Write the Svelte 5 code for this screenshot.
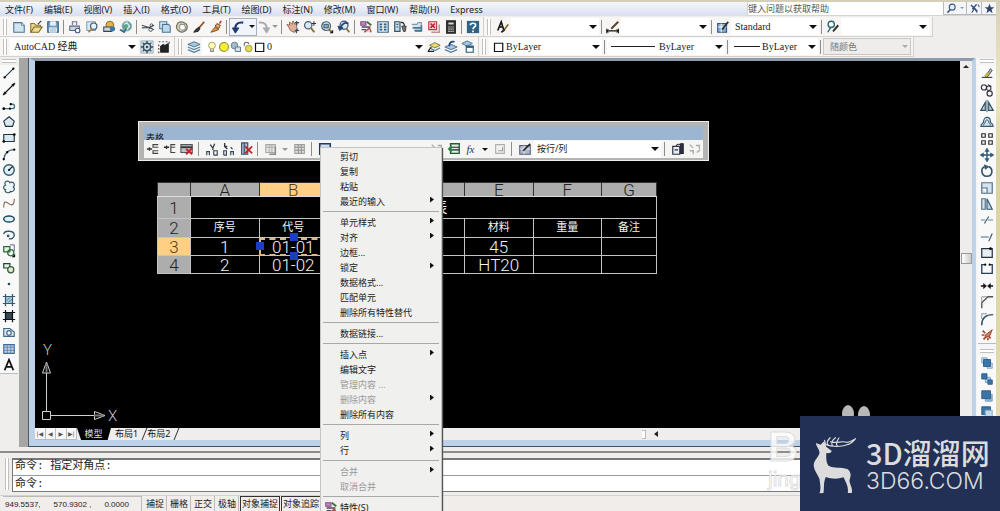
<script>
  const S = (d, c = '#33506b', w = 1.3, f = 'none') =>
    `<path d="${d}" stroke="${c}" stroke-width="${w}" fill="${f}"/>`;

  const icons = {
    new: S('M2 3H11L14 6V14H2Z', '#4d7590', 1.2, '#cfe4f2') + S('M11 3V6H14', '#4d7590', 1, '#fff'),
    open: S('M2 14V4H6L8 6H13V9', '#8a7430', 1.2, '#e8d488') + S('M2 14L6 8H15L11 14Z', '#7a6528', 1.2, '#f1dd8e') + S('M10 5L14 1', '#3e3e3e', 1.5),
    save: S('M2 2H14V14H2Z', '#2f5878', 1.2, '#6d9dc0') + S('M5 2H11V6H5Z', '#dbe9f3', 1, '#e9f2f8') + S('M4 9H12V14H4Z', '#e4eef5', 1, '#b8d0e0'),
    print: S('M5 6V2H10V6', '#7d6d96', 1.2, '#eee') + S('M2 7H13V12H2Z', '#566a86', 1.2, '#cbd4e0') + '<circle cx="11" cy="12" r="2.6" fill="#fff" stroke="#4a5c86" stroke-width="1.3"/>',
    preview: S('M2 2H12V12H2Z', '#6f8eab', 1, '#d9e8f4') + '<circle cx="10" cy="7" r="3.6" fill="#e8f4fb" stroke="#35566f" stroke-width="1.3"/>' + S('M8 10L4 14', '#b07a30', 2),
    publish: '<circle cx="9" cy="6" r="4.5" fill="#e2b93b" stroke="#7a5a21"/>' + S('M2 8H11V13H2Z', '#39424c', 1.2, '#d0d7df') + '<circle cx="12" cy="10" r="3" fill="#3d79a8"/>',
    globe: '<circle cx="9" cy="7" r="5.6" fill="#5ea38c" stroke="#9ab7c8"/>' + S('M6 5L9 3L12 7L9 11', '#d9ecf2', 1.6) + S('M1 11L6 14L8 10', '#375b7a', 1.5, '#80a5c0'),
    cut: S('M1 6L9 8.5L15 6M1 9L9 8.5L15 11', '#3b4652', 1.2) + '<circle cx="11" cy="11" r="2" fill="none" stroke="#3b4652"/><circle cx="12" cy="6" r="1.6" fill="none" stroke="#3b4652"/>',
    copy: S('M2 2H10V10H2Z', '#45779a', 1.2, '#e7f1f8') + S('M5 5H12L14 7V14H5Z', '#45779a', 1.2, '#bcd8ea'),
    paste: S('M3 4C6 0 14 3 14 8C14 13 8 15 5 13C1 11 1 7 3 4Z', '#736b53', 1.3, '#d6cfb2') + S('M6 5H11L12 10L8 12L5 9Z', '#6c7d8c', 1, '#fff'),
    brush: S('M14 2L8 9', '#8b5a2a', 2) + S('M8 8L4 11L2 14L7 13L9 10Z', '#222', 1, '#333'),
    match: S('M2 14L7 8L11 11L6 13Z', '#8c4a20', 1, '#cf9846') + S('M7 7L9 4L13 6L11 10Z', '#6a3f20', 1, '#d9aa60') + S('M12 4L14 1', '#b33', 1.8),
    undo: S('M14 3C7 2 4 6 5 12', '#1e3b70', 2.4) + S('M1.5 9L9 9L5 15Z', '#1e3b70', 1, '#1e3b70'),
    redo: S('M2 3C9 2 12 6 11 12', '#a9adb2', 2.2) + S('M7 9H14.5L11 15Z', '#a9adb2', 1, '#a9adb2'),
    pan: S('M3 8L1 5L4 6L4 2L7 5L8 1L10 5L13 3L12 8L14 12L9 14L5 12Z', '#94604d', 1, '#ddb09a') + S('M12 1V6M10 3H15M12 10V15M10 12H15', '#2f5478', 1.3),
    zoomrt: '<circle cx="6" cy="6" r="4.2" fill="#dbe9f2" stroke="#46627a" stroke-width="1.4"/>' + S('M9 9L13 14', '#8a7034', 2.2) + S('M10 4H15M12.5 1.5V6.5', '#333', 1.2),
    zoomwin: '<circle cx="7" cy="7" r="5" fill="#cfe0ec" stroke="#46627a" stroke-width="1.4"/>' + S('M4.5 5H9.5V9H4.5Z', '#355', 1, '#8ba8b9') + S('M10 11L13 13', '#8a7034', 2.2) + '<path d="M11 15H15V11Z" fill="#111"/>',
    zoomprev: '<circle cx="8" cy="6" r="4.6" fill="#dbe9f2" stroke="#3c5670" stroke-width="1.4"/>' + S('M11 10L14 14', '#8a7034', 2.2) + S('M13 4C9 2 6 4 4 9', '#22447c', 2) + S('M1 7L7 9L3 12Z', '#22447c', 1, '#22447c'),
    props: S('M2 2H8V6H2Z', '#844b86', 1.2, '#b98bc0') + S('M9 2L14 6', '#3c6d3a', 2) + S('M3 8H13M3 11H8', '#4a4a60', 1.5) + S('M6 14L12 9L14 14', '#a94a4a', 1.5, '#ecc'),
    dc: S('M2 2H14V14H2Z', '#466a86', 1.4, '#dcebf4') + S('M4 5H7M9 5H12M4 8H7M9 8H12M4 11H7M9 11H12', '#2f5d80', 1.8),
    palettes: S('M2 2H8V13H2Z', '#33566f', 1.4, '#c9dde9') + S('M4 5H6M4 8H6', '#33566f') + S('M9 3C12 2 13 5 13 7', '#222', 1.4) + S('M10 7H15L14 13H12Z', '#333', 1, '#777'),
    sheet: S('M2 5H8L9 3H13V13H6', '#7b9cb3', 1.2, '#d6e4ee') + S('M3 9H12M5 12H13V6', '#4d7a96', 2),
    markup: S('M2 2H11V11H2Z', '#b43a48', 1.3, '#f6d9dc') + S('M4 4L9 9M9 4L4 9', '#c8202c', 1.8) + S('M5 14H14V5', '#c48d94', 1.6),
    calc: S('M3 1H13V15H3Z', '#222', 1.2, '#333') + S('M5 4H11', '#cfe3c8', 2.2) + S('M5 8H11M5 10.5H11M5 13H11', '#eee', 1.3) + S('M7 7V14M9.3 7V14', '#333', 1),
    help: '<rect x="1" y="1" width="14" height="14" fill="#2d6488"/>' + S('M5 6C5 3 11 3 11 6C11 8 8 8 8 10.5M8 12V14', '#fff', 1.9),
    tstyle: S('M2 12L6 2L9 12M3 8H8', '#111', 1.8) + S('M8 13L14 5', '#7a5020', 1.8) + S('M6 14L10 11', '#222', 2),
    dstyle: S('M1 10V15M14 10V15M1 12.5H14', '#111', 1.5) + S('M3 11L1 12.5L3 14M12 11L14 12.5L12 14', '#111', 1) + S('M6 10L14 2', '#5a4028', 2.2),
    tablest: S('M2 4H12V14H2Z', '#2e557e', 1.4, '#8fb2d2') + S('M2 8H12M6 4V14', '#fff', 1) + S('M7 11L14 2', '#33302a', 2),
    mlstyle: '<circle cx="6" cy="5" r="3.6" fill="#fff" stroke="#2d6070" stroke-width="1.5"/>' + S('M5 9L2 14', '#2d6070', 1.5) + S('M8 13L14 6', '#33302a', 2.2),
    gear: S('M1 1V15H15V1Z', '#7e98aa', 0.8, '#dfe7ed') + '<circle cx="8" cy="8" r="4.2" fill="#cfdce6" stroke="#35505f" stroke-width="1.8"/><circle cx="8" cy="8" r="1.5" fill="#35505f"/>' + S('M8 1V4M8 12V15M1 8H4M12 8H15M3 3L5 5M11 11L13 13M13 3L11 5M5 11L3 13', '#35505f', 1.6),
    myws: S('M4 7L7 5L9 6L13 4V14H4Z', '#222', 1, '#222') + S('M2 2H4M6 2H8M10 2H12M14 2V4M2 5V7M2 9V11M2 13V15', '#555', 1.4),
    layers: S('M1 5L8 2L15 5L8 8Z', '#3e6a8b', 1, '#a9c7dc') + S('M1 8L8 11L15 8M1 11L8 14L15 11', '#56809e', 1.5),
    bulb: '<circle cx="8" cy="6" r="4.5" fill="#fffbb8" stroke="#a59b58" stroke-width="1.2"/>' + S('M6 11V14H10V11', '#777', 1.2, '#ccc'),
    sun: '<circle cx="8" cy="8" r="6" fill="#f5ee3c" stroke="#958c2e" stroke-width="1.4"/>',
    vpfreeze: '<circle cx="6" cy="6" r="4.5" fill="#a7bccb" stroke="#5f7a8e" stroke-width="1.2"/>' + S('M7 8H14V14H7Z', '#55738a', 1.2, '#d5e2eb'),
    lock: S('M3 7V4C3 1 9 1 9 4', '#777', 1.5) + '<circle cx="9" cy="10" r="4.5" fill="#e3dc4a" stroke="#8d8531"/>',
    swatch: S('M2 3H13V14H2Z', '#111', 1.6, '#fff'),
    laymake: S('M3 6L9 3L15 6L9 9Z', '#77702c', 1, '#e6de79') + S('M3 9L9 12L15 9', '#668b9f', 1.5) + S('M1 13L5 8M1 13H8', '#222', 1.3),
    layprev: S('M1 8L8 5L15 8L8 11Z', '#3e6a8b', 1, '#a9c7dc') + S('M1 11L8 14L15 11', '#56809e', 1.5) + S('M12 2C8 1 6 3 6 7', '#22447c', 2),
    layst: S('M1 4L7 1L13 4L7 7Z', '#3e6a8b', 1, '#a9c7dc') + S('M6 7H14V14H6Z', '#2a5a80', 1.3, '#fff') + S('M6 8H14', '#2a5a80', 2),
    line: S('M3 13L13 3', '#1f3540', 1.3) + '<circle cx="3" cy="13" r="1.3"/><circle cx="13" cy="3" r="1.3"/>',
    xline: S('M2 14L14 2', '#111', 1.3) + S('M1 15L3 11L5 13ZM15 1L11 3L13 5Z', '#111', 0.5, '#111'),
    pline: S('M2 11H12C15 11 15 6 12 6H10', '#45748c', 1.6) + '<circle cx="2" cy="11" r="1.6"/><circle cx="10" cy="6" r="1.3"/><circle cx="9" cy="11" r="1.2"/>',
    polygon: S('M8 2L14 7L12 13H4L2 7Z', '#1f3540', 1.3, '#dbe8f0'),
    rect: S('M2 4H14V12H2Z', '#1f3540', 1.3, '#dbe8f0') + '<circle cx="2" cy="12" r="1.5"/><circle cx="14" cy="4" r="1.5"/>',
    arc: S('M2 14C3 7 7 3 14 3', '#35606f', 1.4) + '<circle cx="2" cy="14" r="1.3"/><circle cx="6" cy="6" r="1.3"/><circle cx="14" cy="3" r="1.3"/>',
    circle: '<circle cx="8" cy="8" r="6" fill="#e3f0f7" stroke="#2d5a70" stroke-width="1.6"/>' + S('M8 8L12 4', '#222', 1.3) + '<circle cx="8" cy="8" r="1.2"/>',
    cloud: S('M4 6C1 1 8 0 9 3C14 1 15 6 13 8C16 11 12 14 10 13C8 16 2 14 4 11C1 10 1 7 4 6Z', '#2f5363', 1.3, '#eef5f9'),
    spline: S('M2 13C2 3 6 8 8 9C11 11 14 11 14 3', '#7a5b4c', 1.2),
    ellipse: '<ellipse cx="8" cy="8" rx="6" ry="3.5" fill="#e3f0f7" stroke="#1f4a5a" stroke-width="1.7"/>',
    earc: S('M2 7C3 2 14 3 14 8C14 12 10 13 8 12', '#2f5a74', 1.6) + '<circle cx="7" cy="9" r="1.6" fill="#2f5a74"/>',
    insert: S('M2 3H9V9H2Z', '#2d6a3a', 1.4, '#e5f2e5') + '<circle cx="10" cy="10" r="3.5" fill="none" stroke="#2d6a3a" stroke-width="1.4"/>' + S('M9 1H14V8', '#557', 1) + '<path d="M11 15H15V11Z" fill="#111"/>',
    block: S('M2 3H9V8H2Z', '#1f4630', 1.4, '#e5f2e5') + '<circle cx="10" cy="10" r="3.5" fill="#dfead7" stroke="#395b3a" stroke-width="1.4"/>',
    point: '<circle cx="8" cy="8" r="1.5" fill="#24505c"/>',
    hatch: S('M4 4H12V12H4Z', '#35586d', 1, '#a7cbe0') + S('M1 4H15M1 12H15M4 1V15M12 1V15', '#35586d', 1.4) + S('M5 9L9 5M7 11L11 7', '#35586d', 0.8),
    grad: S('M4 4H12V12H4Z', '#111', 1, '#334654') + S('M1 4H15M1 12H15M4 1V15M12 1V15', '#111', 1.4),
    region: S('M2 13V4H9L14 8V13Z', '#3e6a8b', 1.3, '#d5e6f2') + '<circle cx="8" cy="9" r="2.5" fill="#fff" stroke="#3e6a8b" stroke-width="1.3"/>',
    table: S('M2 3H14V13H2Z', '#3e6a9b', 1.3, '#bcd4ea') + S('M2 6H14M2 9.5H14M6 3V13M10 3V13', '#5c84ac', 1),
    mtext: S('M3 14L8 2L13 14M5 10H11', '#111', 2),
    erase: S('M6 12L12 3L14 5L9 12Z', '#555', 1, '#a9a9a9') + S('M6 12L9 8', '#c6bb2b', 3) + S('M2 13H14', '#333', 1.2),
    copyobj: '<circle cx="4.5" cy="5" r="3" fill="none" stroke="#334" stroke-width="1.3"/><circle cx="10" cy="6" r="2.5" fill="none" stroke="#334" stroke-width="1.2"/><circle cx="11" cy="12" r="3" fill="none" stroke="#334" stroke-width="1.3"/>' + S('M9 2L13 4', '#334'),
    mirror: S('M1 13L6 4V13ZM15 13L10 4V13Z', '#2e4a5b', 1.3, '#c8dbe8') + S('M8 1V15', '#2e4a5b', 1),
    offset: S('M1 13C1 9 4 10 4 8C4 1 12 1 12 8C12 10 15 9 15 13Z', '#35586d', 1.3, '#cfe1ec') + S('M4 12C4 10 6 10 6 8C6 5 10 5 10 8C10 10 12 10 12 12', '#35586d', 1.1),
    array: S('M2 2H6V6H2ZM10 2H14V6H10ZM2 10H6V14H2ZM10 10H14V14H10Z', '#333', 1.4),
    move: S('M8 2V14M2 8H14', '#2e5878', 1.6) + S('M8 0L10.5 4H5.5ZM8 16L5.5 12H10.5ZM0 8L4 5.5V10.5ZM16 8L12 5.5V10.5Z', '#2e5878', 0.5, '#2e5878'),
    rotate: S('M5 3C0 6 2 14 8 14C15 14 15 5 10 3', '#35586d', 1.9) + S('M5 1L10 3L6 6Z', '#35586d', 1, '#35586d'),
    scale: S('M2 2H14V14H2Z', '#4f7086', 1.3, '#d5e4ee') + S('M2 8H8V14', '#4f7086', 1.3, '#fff'),
    stretch: S('M2 2H6V14H2Z', '#4f7086', 1.3, '#d5e4ee') + S('M8 2V14H14Z', '#35586d', 1.3, '#c1d5e2'),
    trim: S('M1 8H6M9 8H15', '#6b8694', 1.4) + S('M5 12L10 4', '#35586d', 1.3),
    extend: S('M1 8H10', '#6b8694', 1.4) + S('M10 13L14 4', '#35586d', 1.3),
    brk1: S('M2 3H14V13H2Z', '#25333c', 1.4, '#e8eff4') + '<circle cx="12" cy="3" r="1.5"/>',
    brk2: S('M6 3H2V13H14V3H11', '#25405b', 1.5) + '<circle cx="6" cy="3" r="1.2"/><circle cx="11" cy="3" r="1.2"/>',
    join: S('M1 8H6M10 8H15', '#111', 1.6) + S('M4 5L7.5 8L4 11ZM12 5L8.5 8L12 11Z', '#111', 0.5, '#111'),
    chamfer: S('M2 15V9L9 2H15', '#555', 1.5, '#eef3f6') + S('M2 8V2H8', '#888', 1),
    fillet: S('M2 15C2 7 6 3 15 3', '#35506f', 1.7) + S('M2 8V2H8', '#888', 1),
    explode: S('M3 3L6 6M2 8H5M4 13L7 10M9 14V11M12 12L10 9', '#a5452d', 1.9) + S('M6 8L14 2L11 9L6 11Z', '#993a28', 1, '#cc7f58'),
    front: S('M2 2H8V8H2Z', '#7fa6c6', 1, '#c3dbed') + S('M8 8H14V14H8Z', '#7fa6c6', 1, '#c3dbed') + S('M4 4H12V12H4Z', '#285a88', 1, '#3d74a6'),
    back: S('M6 6H12V12H6Z', '#7fa6c6', 1, '#a9c9e2') + S('M2 2H8V8H2ZM9 9H14V14H9Z', '#285a88', 1, '#3d74a6'),
    above: S('M6 6H14V14H6Z', '#7fa6c6', 1, '#8db4d2') + S('M2 2H12V11H2Z', '#285a88', 1, '#3d74a6'),
    under: S('M2 2H12V11H2Z', '#285a88', 1, '#3d74a6') + S('M6 6H14V14H6Z', '#7fa6c6', 1, '#c3dbed'),
    rowa: S('M1 8H7M4 6V10', '#333', 1.5) + S('M14 3H8V6H14M14 10H8V13H14', '#444', 1.3),
    rowb: S('M1 6H7M4 4V8', '#333', 1.5) + S('M14 3H9V6H14M9 6V12H14', '#444', 1.3),
    rowdel: S('M1 3H14V12H1Z', '#555', 1.2, '#b6c2cc') + S('M1 6H14', '#333', 2) + S('M7 8L14 14M14 7L7 14', '#c6242a', 2.2),
    cola: S('M11 2L9 7L6 3M9 7V9', '#333', 1.4) + S('M2 15V11H5V15M10 15V10H14V15H10', '#345', 1.3),
    colb: S('M3 1V5L6 8M3 5H6', '#333', 1.5) + S('M2 15V10H5V15H2M10 15V11H13V15M10 6L12 8', '#345', 1.3),
    coldel: S('M3 1H10V14H3Z', '#35506f', 1.3, '#a9bfd4') + S('M6 1V14', '#35506f') + S('M7 5L15 13M15 5L7 13', '#c6242a', 2.1),
    merge: S('M2 3H13V12H2Z', '#a7a7a7', 1.2, '#e4e4e4') + S('M2 6H13M6 3V12M9 3V12', '#a7a7a7', 1) + S('M13 5V14H6', '#888', 1.6),
    unmerge: S('M2 3H13V13H2Z', '#a0a0a0', 1.2, '#e0e0e0') + S('M2 6H13M2 9.5H13M6 3V13M9.5 3V13', '#909090', 1.2),
    bgfill: S('M2 2H14V14H2Z', '#223a60', 1.8, '#cfdbe8'),
    link: S('M4 2H14V13H4Z', '#235b35', 1.5, '#dcefe0') + S('M4 6H14M4 9H14', '#223', 1.4) + S('M1 8L5 4V12Z', '#27803d', 0.5, '#27803d'),
    field: S('M3 3H13V13H3Z', '#b0b0b0', 1.3, '#f1f1f1') + S('M6 10H11V6', '#999', 1.2),
    cellst: S('M2 4H14V14H2Z', '#557', 1.2, '#a9bac8') + S('M2 8H14M7 4V14', '#eee', 1) + S('M6 10L14 2', '#222', 2),
    dlink: S('M2 5H10V14H2Z', '#334', 1.4, '#e5edf2') + S('M11 2H14V13H11Z', '#223', 1.2, '#334') + S('M6 5C6 3 8 2 11 3M4 9H8', '#334', 1.3),
    dl2: S('M2 3L6 7M2 10H6V14M9 4H13V8M10 12L14 9', '#aaa', 1.5),
    find: '<circle cx="9" cy="6" r="4.3" fill="#e7eff6" stroke="#3e5b7c" stroke-width="1.6"/>' + S('M6 10L2 14', '#3e5b7c', 2.2),
    sat: S('M3 3L12 12M11 2L5 9', '#324f7a', 2.2) + S('M4 14L8 8L12 14M13 2L15 6', '#324f7a', 1.5),
    star: '<path d="M8 1L10 6H15L11 9.500L12.500 15L8 11.500L3.500 15L5 9.500L1 6H6Z" fill="#33476b"/>'
  };

  const menus = ['文件(F)', '编辑(E)', '视图(V)', '插入(I)', '格式(O)', '工具(T)', '绘图(D)', '标注(N)', '修改(M)', '窗口(W)', '帮助(H)', 'Express'];
  const std1 = ['new', 'open', 'save', '|', 'print', 'preview', 'publish', 'globe', '|', 'cut', 'copy', 'paste', 'brush', 'match', '|'];
  const std2 = ['|', 'pan', 'zoomrt', 'zoomwin', 'zoomprev', '|', 'props', 'dc', 'palettes', 'sheet', 'markup', 'calc', '|', 'help'];
  const draw = ['line', 'xline', 'pline', 'polygon', 'rect', 'arc', 'circle', 'cloud', 'spline', 'ellipse', 'earc', 'insert', 'block', 'point', 'hatch', 'grad', 'region', 'table', 'mtext'];
  const modify = ['erase', 'copyobj', 'mirror', 'offset', 'array', 'move', 'rotate', 'scale', 'stretch', 'trim', 'extend', 'brk1', 'brk2', 'join', 'chamfer', 'fillet', 'explode'];
  const order = ['front', 'back', 'above', 'under'];

  const popup = [
    [{ t: '剪切' }, { t: '复制' }, { t: '粘贴' }, { t: '最近的输入', sub: true }],
    [{ t: '单元样式', sub: true }, { t: '对齐', sub: true }, { t: '边框...' }, { t: '锁定', sub: true }, { t: '数据格式...' }, { t: '匹配单元' }, { t: '删除所有特性替代' }],
    [{ t: '数据链接...' }],
    [{ t: '插入点', sub: true }, { t: '编辑文字' }, { t: '管理内容 ...', off: true }, { t: '删除内容', sub: true, off: true }, { t: '删除所有内容' }],
    [{ t: '列', sub: true }, { t: '行', sub: true }],
    [{ t: '合并', sub: true, off: true }, { t: '取消合并', off: true }],
    [{ t: '特性(S)', icon: 'props' }]
  ];

  const cols = ['A', 'B', 'C', 'D', 'E', 'F', 'G'];
  const rows = [
    ['1', '01-01', '', '', '45', '', ''],
    ['2', '01-02', '', '', 'HT20', '', '']
  ];

  const modes = [
    ['捕捉', false], ['栅格', false], ['正交', false], ['极轴', false], ['对象捕捉', true], ['对象追踪', true]
  ];
</script>

{#snippet ico(name)}
  <svg class="ico" viewBox="0 0 16 16" aria-hidden="true">{@html icons[name]}</svg>
{/snippet}

{#snippet tools(list)}
  {#each list as n}
    {#if n === '|'}<i class="sep"></i>{:else}<button class="tool" aria-label={n}>{@render ico(n)}</button>{/if}
  {/each}
{/snippet}

{#snippet combo(label, value, cls)}
  <label class="combo {cls}">
    {#if cls.includes('lined')}<i class="rule"></i>{/if}
    {#if cls.includes('boxed')}{@render ico('swatch')}{/if}
    <select aria-label={label} disabled={cls.includes('off')}><option>{value}</option></select>
  </label>
{/snippet}

<div class="app">
  <div class="frame">
    <header class="menubar">
      <nav>
        {#each menus as m}<button>{m}</button>{/each}
      </nav>
      <div class="search">
        <input aria-label="帮助" placeholder="键入问题以获取帮助" />
        <button aria-label="搜索">{@render ico('find')}</button>
        <button aria-label="搜索选项" class="thin"><i class="caret dim"></i></button>
        <button aria-label="通讯中心">{@render ico('sat')}</button>
        <button aria-label="收藏夹">{@render ico('star')}</button>
      </div>
    </header>

    <div class="bars">
      <div class="bar">
        <i class="grip"></i>
        {@render tools(std1)}
        <button class="tool undo" aria-label="undo">{@render ico('undo')}<i class="caret"></i></button>
        <button class="tool redo" aria-label="redo">{@render ico('redo')}</button>
        <i class="caret dim"></i>
        {@render tools(std2)}
      </div>
      <div class="bar styles">
        <i class="grip"></i>
        {@render tools(['tstyle'])}
        {@render combo('文字样式', '', 'w88')}
        <i class="sep"></i>
        {@render tools(['dstyle'])}
        {@render combo('标注样式', '', 'w88')}
        <i class="sep"></i>
        {@render tools(['tablest'])}
        {@render combo('表格样式', 'Standard', 'w88')}
        <i class="sep"></i>
        {@render tools(['mlstyle'])}
        {@render combo('多重引线样式', '', 'w88')}
      </div>
    </div>

    <div class="bars second">
      <div class="bar">
        <i class="grip"></i>
        {@render combo('工作空间', 'AutoCAD 经典', 'w128')}
        {@render tools(['gear', 'myws'])}
      </div>
      <div class="bar">
        <i class="grip"></i>
        {@render tools(['layers'])}
        <label class="combo layer">
          {#each ['bulb', 'sun', 'vpfreeze', 'lock', 'swatch'] as n}{@render ico(n)}{/each}
          <select aria-label="图层"><option>0</option></select>
        </label>
        {@render tools(['laymake', 'layprev', 'layst'])}
      </div>
      <div class="bar">
        <i class="grip"></i>
        {@render combo('颜色', 'ByLayer', 'w112 boxed')}
        <i class="sep"></i>
        {@render combo('线型', 'ByLayer', 'w118 lined')}
        <i class="sep"></i>
        {@render combo('线宽', 'ByLayer', 'w88 lined short')}
        <i class="sep"></i>
        {@render combo('打印样式', '随颜色', 'w88 off')}
      </div>
    </div>

    <main class="work">
      <aside class="dock left">
        <i class="hgrip"></i>
        <div class="stack draw">{@render tools(draw)}</div>
      </aside>

      <section class="doc">
        <div class="view">
          <div class="canvas">
            <div class="panel">
              <div class="title">表格</div>
              <div class="row">
                {@render tools(['rowa', 'rowb', 'rowdel', '|', 'cola', 'colb', 'coldel', '|', 'merge'])}
                <i class="caret dim"></i>
                {@render tools(['unmerge', '|', 'bgfill'])}
                <i class="fill"></i>
                {@render tools(['dl2', 'link'])}
                <button class="tool fx">fx</button>
                <i class="caret"></i>
                {@render tools(['field', '|', 'cellst'])}
                {@render combo('单元样式', '按行/列', 'w128 sans')}
                {@render tools(['|', 'dlink', 'dl2'])}
              </div>
            </div>

            <table class="sheet">
              <colgroup><col class="c0" />{#each cols as c}<col class={c === 'G' ? 'cg' : 'cn'} />{/each}</colgroup>
              <thead>
                <tr class="r0"><th></th>{#each cols as c}<th class:hot={c === 'B'}>{c}</th>{/each}</tr>
              </thead>
              <tbody>
                <tr class="r1"><th>1</th><td colspan="7" class="name">明细表</td></tr>
                <tr class="r2"><th>2</th>{#each ['序号', '代号', '名称', '数量', '材料', '重量', '备注'] as h}<td class="head">{h}</td>{/each}</tr>
                {#each rows as r, i}
                  <tr class="r3">
                    <th class:hot={i === 0}>{i + 3}</th>
                    {#each r as v, j}
                      <td class:picked={i === 0 && j === 1}>{v}{#if i === 0 && j === 1}<i class="knob l"></i><i class="knob t"></i><i class="knob b"></i>{/if}</td>
                    {/each}
                  </tr>
                {/each}
              </tbody>
            </table>

            <svg class="ucs" viewBox="0 0 84 84" aria-hidden="true">
              <g fill="none" stroke="#d0d0d0" stroke-width="1">
                <path d="M7.500 70V30M11 73.500H56M3.500 69.500H11.500V77.500H3.500ZM7.500 20L11.500 31H3.500ZM66 73.500L55.500 69.500V77.500Z" />
                <path d="M7.500 22V31M64 73.500H55" stroke-width="2" stroke="#777" />
              </g>
              <text x="4" y="13">Y</text>
              <text x="69" y="79">X</text>
            </svg>

            <svg class="paw" viewBox="0 0 30 14" aria-hidden="true">
              <ellipse cx="8" cy="10" rx="6" ry="9" /><ellipse cx="24" cy="11" rx="6" ry="9" />
            </svg>
          </div>
          <div class="vscroll"><i class="up"></i><i class="thumb"></i></div>
        </div>
        <div class="tabs">
          <div class="nav">
            <button aria-label="第一个">|◀</button><button aria-label="上一个">◀</button><button aria-label="下一个">▶</button><button aria-label="最后一个">▶|</button>
          </div>
          <button class="tab on">模型</button>
          <button class="tab">布局1</button>
          <button class="tab">布局2</button>
          <div class="hscroll"><i class="split"></i><i class="caretl"></i></div>
        </div>
      </section>

      <aside class="dock right">
        <i class="hgrip"></i>
        <div class="stack modify">{@render tools(modify)}</div>
        <i class="hgrip two"></i>
        <div class="stack order">{@render tools(order)}</div>
      </aside>
    </main>

    <section class="command">
      <i class="grip"></i>
      <div class="lines">
        <p>命令: 指定对角点:</p>
        <label><span>命令:</span><input aria-label="命令" /></label>
      </div>
    </section>

    <footer class="status">
      <div class="coords"><span>949.5537,</span><span>570.9302 ,</span><span>0.0000</span></div>
      {#each modes as [t, on]}<button class:on>{t}</button>{/each}
    </footer>
  </div>

  <div class="popup" role="menu">
    {#each popup as group}
      <div class="group">
        {#each group as it}
          <button role="menuitem" disabled={it.off}>
            <span class="slot">{#if it.icon}{@render ico(it.icon)}{/if}</span>{it.t}{#if it.sub}<i class="arrow"></i>{/if}
          </button>
        {/each}
      </div>
    {/each}
  </div>

  <div class="mark"><b>Ba</b><span>jing</span></div>

  <div class="brand">
    <svg viewBox="510 130 140 180" aria-hidden="true">
      <path fill="#dcdcdc" d="M524 154L538 159L549 149L555 165L572 178L567 184L555 185C556 200 554 212 562 222C580 231 600 225 618 232C628 238 631 250 626 262C621 274 636 286 632 304L620 304C623 286 614 272 607 257C590 263 570 262 554 256C546 272 550 287 547 304L535 305C541 290 536 275 535 262C530 248 521 240 518 225C515 208 530 200 535 185C535 172 526 166 524 154Z" />
      <g fill="none" stroke="#dcdcdc" stroke-width="3.500" stroke-linecap="round">
        <path d="M550 158C575 167 605 166 622 158C634 154 638 147 643 141M560 159C554 150 562 143 567 138M573 161C568 150 576 143 583 138M588 162C582 153 589 147 593 139M553 158L550 146M568 150C582 157 600 147 612 151C624 155 634 147 642 142" />
      </g>
    </svg>
    <div><strong>3D溜溜网</strong><span>3D66.COM</span></div>
  </div>
</div>

<style>
  :global(body) { margin: 0; background: #ece9e4; }
  .app {
    position: relative; display: flex; height: 100vh; overflow: hidden; box-sizing: border-box;
    padding: 2px 4px 0 0; background: linear-gradient(#d5cfb9 0, #efe9c9 90px, #d9d2a2 160px, #e6dfb4 100%);
    font: 9px/14px "Noto Sans", "Noto Sans CJK SC", sans-serif; color: #1b1b1b;
  }
  .app :global(*) { box-sizing: border-box; }
  button, input, select { font: inherit; color: inherit; margin: 0; padding: 0; border: 0; background: none; border-radius: 0; white-space: nowrap; }
  i { display: block; flex: none; }
  .frame { flex: 1; min-width: 0; display: flex; flex-direction: column; background: #efeeec; }
  .ico { display: block; width: 14px; height: 14px; flex: none; }

  .menubar { display: flex; height: 14px; background: linear-gradient(#f4f6fb, #d9dff0); }
  .menubar nav { flex: 1; display: flex; gap: 11px; padding-left: 5px; }
  .menubar nav button { line-height: 13px; }
  .search { display: flex; width: 249px; background: #fff; border: 1px solid #d8d6c8; border-width: 0 0 1px 1px; line-height: 12px; }
  .search input { flex: 1; min-width: 0; outline: 0; }
  .search input::placeholder { color: #555; opacity: 1; }
  .search button { width: 15px; display: grid; place-items: center; border: 1px solid #b5b9c4; border-width: 0 0 1px 1px; background: #f4f5f8; }
  .search .ico { width: 11px; height: 11px; }
  .search .thin { width: 8px; border-left: 0; }

  .bars { display: flex; height: 20px; padding-top: 1px; }
  .second { height: 22px; }
  .bar { display: flex; align-items: center; height: 20px; padding: 0 2px 0 3px; background: #f7f6f5; border: 1px solid #d3d1ce; border-width: 0 1px 1px 0; }
  .styles { padding-right: 3px; }
  .grip { width: 4px; height: 16px; margin-right: 3px; border: 1px solid #c2c0bd; border-width: 0 1px; background: #fff; }
  .tool { width: 17px; height: 17px; display: flex; align-items: center; justify-content: center; flex: none; }
  .sep { width: 1px; height: 14px; margin: 0 2px; background: #8d8d8d; }
  .caret { width: 0; height: 0; margin: 0 1px; border: 3px solid transparent; border-top-color: #111; border-bottom: 0; }
  .caret.dim { border-top-color: #999; }
  .search .caret { margin: 0; border-width: 2px 2px 0; }
  .undo { width: 28px; height: 18px; gap: 3px; border: 1px solid #a3afc4; background: #f1f4fa; }
  .redo { width: 14px; }
  .combo { position: relative; display: flex; align-items: center; height: 17px; background: #fff; flex: none; padding-left: 4px; font: 10px/16px "Liberation Serif", "Noto Sans CJK SC", serif; }
  .combo::after { content: ""; width: 0; height: 0; margin: 0 2px 0 -10px; border: 4px solid transparent; border-top-color: #111; border-bottom: 0; pointer-events: none; }
  .combo select { appearance: none; flex: 1; min-width: 0; height: 16px; padding-right: 10px; opacity: 1; outline: 0; }
  .combo.sans { font: 9px/16px "Noto Sans", "Noto Sans CJK SC", sans-serif; }
  .combo .ico { width: 12px; height: 12px; }
  .w88 { width: 88px; }
  .w112 { width: 113px; gap: 1px; }
  .w118 { width: 118px; }
  .w128 { width: 128px; }
  .rule { width: 44px; height: 1px; margin-right: 4px; background: #222; }
  .short .rule { width: 26px; margin-right: 2px; }
  .off { padding-left: 6px; background: #eeedeb; border: 1px solid #c9c7c4; color: #777; font-size: 9px; }
  .off::after { border-width: 3px 3px 0; border-top-color: #aaa; }
  .layer { width: 223px; }
  .layer .ico { width: 12px; }
  .layer select { margin-left: 1px; }

  .work { flex: 1; min-height: 0; display: flex; }
  .dock { display: flex; flex-direction: column; flex: none; }
  .left { width: 29px; padding-right: 11px; background: linear-gradient(90deg, #efeeec 19px, #a6a6a4 19px 28px, #4c5964 28px); }
  .right { width: 21px; padding-left: 2px; background: #f4f5f7; border-left: 1px solid #c3d4e4; overflow: hidden; }
  .hgrip { height: 4px; margin: 1px 2px 2px; border: 1px solid #c2c0bd; border-width: 1px 0; background: #fff; }
  .stack { display: flex; flex-direction: column; background: #f9f9f9; }
  .stack .tool { flex: 1; min-height: 0; }
  .stack .ico { width: 14px; height: 14px; }
  .draw { height: 309px; border-bottom: 1px solid #bbb; }
  .modify { height: 279px; border-bottom: 1px solid #bbb; }
  .two { margin-top: 5px; }
  .order { height: 65px; }

  .doc { flex: 1; min-width: 0; display: flex; flex-direction: column; border: 6px solid #bdd1e8; border-width: 3px 3px 6px 6px; border-top-color: #8e9baa; box-shadow: 0 1px #3d5468; margin-bottom: 1px; }
  .view { flex: 1; min-height: 0; display: flex; }
  .canvas { flex: 1; min-width: 0; position: relative; background: #000; overflow: hidden; }
  .vscroll { width: 12px; display: flex; flex-direction: column; align-items: center; background: #eeedec; }
  .up { width: 0; height: 0; margin-top: 4px; border: 3px solid transparent; border-bottom-color: #222; border-top: 0; }
  .thumb { width: 11px; height: 11px; margin-top: 185px; border: 1px solid #999; background: linear-gradient(90deg, #fff, #ccc); }
  .tabs { display: flex; height: 12px; background: #efeeed; line-height: 12px; }
  .nav { display: flex; width: 42px; }
  .nav button { flex: 1; font: 6px/11px "DejaVu Sans", sans-serif; color: #555; border: 1px solid #bbb; border-width: 0 1px 1px 0; background: #f7f7f7; }
  .tab { position: relative; padding: 0 5px 0 4px; color: #111; }
  .tab::after { content: ""; position: absolute; right: -2px; top: 0; height: 12px; border-right: 1px solid #333; transform: skewX(-22deg); }
  .tab.on { width: 34px; color: #ddd; background: #000; clip-path: polygon(0 0, 100% 0, 90% 100%, 12% 100%); }
  .hscroll { flex: 1; display: flex; align-items: center; justify-content: flex-end; gap: 8px; padding-right: 314px; }
  .split { width: 4px; height: 9px; border: 1px solid #bbb; border-left: 0; background: #fff; }
  .caretl { width: 4px; height: 6px; background: #222; clip-path: polygon(100% 0, 0 50%, 100% 100%); }

  .panel { position: absolute; left: 103px; top: 60px; width: 571px; border: 6px solid #b4b4b2; border-top-width: 5px; border-bottom-width: 3px; outline: 1px solid #eee; outline-offset: -1px; }
  .title { height: 14px; padding: 6px 0 0 2px; line-height: 12px; color: #111; background: #9bb5d3; overflow: hidden; }
  .row { display: flex; align-items: center; height: 18px; background: #f5f5f4; }
  .row .sep { margin: 0 4px 0 3px; }
  .fill { flex: 1; }
  .row .caret { margin: 0 3px; }
  .fx { font: italic 11px/14px "Liberation Serif", serif; color: #22395c; }

  .sheet { position: absolute; left: 122px; top: 121px; width: 500px; table-layout: fixed; border-collapse: collapse; color: #f2f2f2; font: 300 17px/16px "Roboto", "Noto Sans CJK SC", sans-serif; text-align: center; }
  .c0 { width: 33px; }
  .cg { width: 55px; }
  .sheet th, .sheet td { padding: 0; border: 1px solid #c4c4c4; font-weight: 300; white-space: nowrap; }
  .sheet th { background: #adadad; color: #222; }
  .sheet thead th { border-color: #333 #333 #ddd; line-height: 12px; }
  .sheet .hot { background: #ffcf85; color: #5b3c10; }
  .r0 { height: 14px; }
  .r1 { height: 22px; }
  .r2 { height: 19px; }
  .r3 { height: 18px; }
  .sheet .name { font-size: 16px; font-weight: 400; }
  .sheet .head { font-size: 11px; font-weight: 400; }
  .sheet .picked { position: relative; outline: 2px dashed #e0b880; outline-offset: -2px; }
  .knob { position: absolute; width: 8px; height: 8px; background: #1a3fc4; }
  .l { left: -4px; top: 4px; }
  .t { left: 30px; top: -5px; }
  .b { left: 30px; bottom: -5px; }
  .ucs { position: absolute; left: 4px; bottom: 2px; width: 84px; height: 84px; }
  .ucs text { font: 300 15px "Roboto", sans-serif; fill: #c8c8c8; }
  .paw { position: absolute; right: 90px; bottom: 10px; width: 30px; height: 14px; overflow: visible; fill: #b8b8b8; }

  .command { display: flex; height: 44px; margin-top: 4px; padding: 5px 0 3px 5px; border-top: 2px solid #8d8d8d; }
  .command .grip { height: 32px; }
  .lines { flex: 1; border: 1px solid #777; border-width: 2px 0 1px 1px; background: #fff; font: 11px/16px "Liberation Mono", "Noto Sans CJK SC", monospace; color: #222; }
  .lines p { margin: 0; height: 16px; padding-left: 2px; line-height: 12px; border-bottom: 1px solid #999; }
  .lines label { display: flex; height: 16px; padding-left: 2px; line-height: 16px; }
  .lines input { flex: 1; outline: 0; }
  .status { display: flex; align-items: center; gap: 1px; height: 16px; padding-left: 3px; background: #f0edea; border-top: 1px solid #d5d3d0; }
  .coords { display: flex; gap: 13px; width: 139px; height: 15px; padding: 1px 2px; margin-right: 1px; border: 1px solid #bbb; border-width: 1px 1px 0 0; font: 8px/14px "Liberation Sans", sans-serif; }
  .status button { height: 15px; padding: 0 2px; border-right: 1px solid #bbb; }
  .status button.on { padding: 0 1px; border: 1px solid #333; border-bottom: 0; }

  .popup { position: absolute; left: 320px; top: 147px; width: 122px; padding: 1px 2px; background: #f0f0ef; border: 1px solid #c4c4c4; box-shadow: 1px 1px 1px #555; }
  .group + .group { margin-top: 2px; padding-top: 3px; border-top: 1px solid #a8a8a8; }
  .popup button { position: relative; display: flex; align-items: center; width: 100%; height: 15px; line-height: 15px; }
  .popup button:disabled { color: #9b9b9b; }
  .slot { width: 17px; padding-left: 1px; }
  .arrow { width: 4px; height: 6px; margin: 0 5px 4px auto; background: #111; clip-path: polygon(0 0, 100% 50%, 0 100%); }

  .mark { position: absolute; right: 164px; bottom: 20px; width: 68px; color: rgba(255, 255, 255, 0.8); -webkit-text-stroke: 1px rgba(215, 215, 215, 0.8); font-family: "Liberation Sans", sans-serif; }
  .mark b { display: block; font-size: 42px; line-height: 40px; }
  .mark span { display: block; font-size: 21px; line-height: 24px; }
  .brand { position: absolute; right: 0; bottom: 0; width: 200px; height: 95px; display: flex; align-items: center; gap: 8px; padding: 3px 0 0 11px; background: #223056; color: #dcdcdc; }
  .brand svg { width: 47px; height: 60px; flex: none; }
  .brand strong { display: block; font: 500 29px/32px "Noto Sans CJK SC", sans-serif; white-space: nowrap; }
  .brand span { display: block; font: 300 23px/26px Inter, sans-serif; }
</style>
